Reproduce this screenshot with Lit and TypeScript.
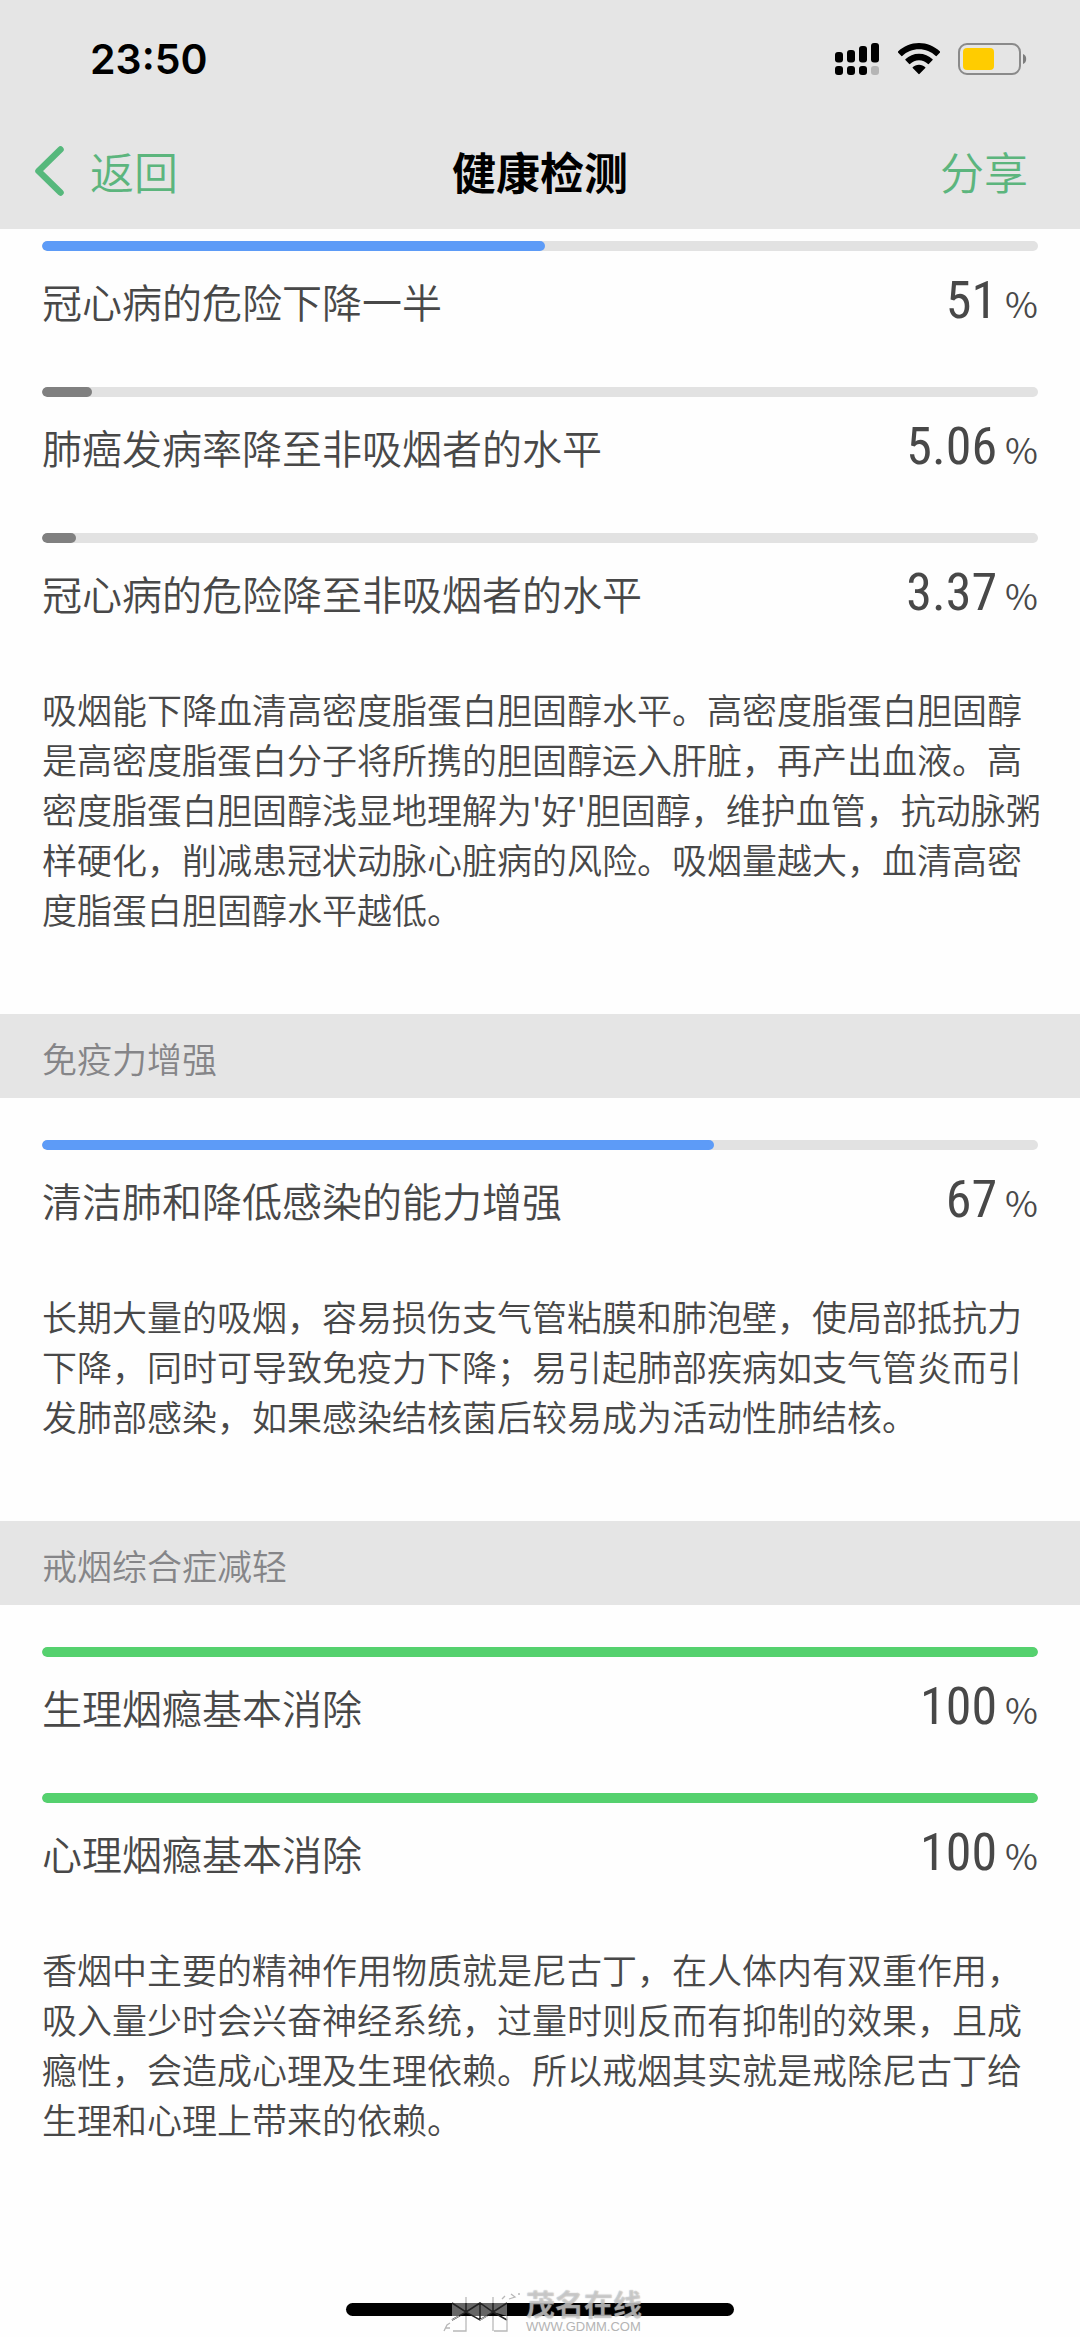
import { LitElement, html, css, svg } from "lit";
import { customElement, property } from "lit/decorators.js";

interface Metric {
  label: string;
  value: string;
  progress: number;
  tone: "blue" | "gray" | "green";
}

interface Section {
  title?: string;
  metrics: Metric[];
  text: string;
}

const sections: Section[] = [
  {
    metrics: [
      { label: "冠心病的危险下降一半", value: "51", progress: 50.5, tone: "blue" },
      { label: "肺癌发病率降至非吸烟者的水平", value: "5.06", progress: 5, tone: "gray" },
      { label: "冠心病的危险降至非吸烟者的水平", value: "3.37", progress: 3.37, tone: "gray" },
    ],
    text: "吸烟能下降血清高密度脂蛋白胆固醇水平。高密度脂蛋白胆固醇是高密度脂蛋白分子将所携的胆固醇运入肝脏，再产出血液。高密度脂蛋白胆固醇浅显地理解为'好'胆固醇，维护血管，抗动脉粥样硬化，削减患冠状动脉心脏病的风险。吸烟量越大，血清高密度脂蛋白胆固醇水平越低。",
  },
  {
    title: "免疫力增强",
    metrics: [
      { label: "清洁肺和降低感染的能力增强", value: "67", progress: 67.5, tone: "blue" },
    ],
    text: "长期大量的吸烟，容易损伤支气管粘膜和肺泡壁，使局部抵抗力下降，同时可导致免疫力下降；易引起肺部疾病如支气管炎而引发肺部感染，如果感染结核菌后较易成为活动性肺结核。",
  },
  {
    title: "戒烟综合症减轻",
    metrics: [
      { label: "生理烟瘾基本消除", value: "100", progress: 100, tone: "green" },
      { label: "心理烟瘾基本消除", value: "100", progress: 100, tone: "green" },
    ],
    text: "香烟中主要的精神作用物质就是尼古丁，在人体内有双重作用，吸入量少时会兴奋神经系统，过量时则反而有抑制的效果，且成瘾性，会造成心理及生理依赖。所以戒烟其实就是戒除尼古丁给生理和心理上带来的依赖。",
  },
];

@customElement("status-bar")
export class StatusBar extends LitElement {
  static styles = css`
    :host {
      display: flex;
      box-sizing: border-box;
      align-items: center;
      justify-content: space-between;
      height: 118px;
      padding: 0 52px 0 90px;
    }
    .time {
      font: 600 41px/50px Inter, "Liberation Sans", sans-serif;
      color: #000;
    }
    .icons {
      display: flex;
      align-items: center;
      gap: 18px;
    }
    svg {
      display: block;
    }
  `;

  render() {
    const bars = [9, 7, 3, 0];
    return html`
      <span class="time">23:50</span>
      <div class="icons">
        <svg width="45" height="32" viewBox="0 0 45 32" aria-hidden="true">
          ${bars.map(
            (top, i) => svg`
              <rect x=${i * 12} y=${top} width="8" height=${19.5 - top} rx="3"></rect>
              <rect x=${i * 12} y="23" width="8" height="9" rx="3" fill=${i === 3 ? "#b5b5b5" : "#000"}></rect>`
          )}
        </svg>
        <svg width="42" height="32" viewBox="0 0 42 32" aria-hidden="true">
          <path d="M21 0C13 0 5.700 3 0 8.600Q-.3 9 0 9.400L3.400 13Q3.800 13.300 4.200 13C8.800 8.700 14.600 6.300 21 6.300S33.200 8.700 37.800 13Q38.200 13.300 38.600 13L42 9.400Q42.200 9 42 8.600C36.300 3 29 0 21 0Z"></path>
          <path d="M21 10.800C15.800 10.800 11 12.800 7.400 16.300Q7 16.700 7.400 17.100L11.200 21Q11.600 21.300 12 21C14.500 18.700 17.600 17.300 21 17.300S27.500 18.700 30 21Q30.400 21.300 30.800 21L34.600 17.100Q35 16.700 34.600 16.300C31 12.800 26.200 10.800 21 10.800Z"></path>
          <path d="M21 21.800C18.500 21.800 16.300 22.800 14.700 24.300Q14.300 24.700 14.700 25.100L20.600 31Q21 31.300 21.400 31L27.300 25.100Q27.700 24.700 27.300 24.300C25.700 22.800 23.500 21.800 21 21.800Z"></path>
        </svg>
        <svg width="70" height="32" viewBox="0 0 70 32" aria-hidden="true">
          <rect x="1" y="1" width="61" height="30" rx="8" fill="none" stroke="#8a8a8a" stroke-width="2"></rect>
          <rect x="5" y="5" width="31" height="22" rx="4" fill="#fc0"></rect>
          <path d="M65 11C67 11.500 68.200 13.500 68.200 16S67 20.500 65 21Z" fill="#7d7d7d"></path>
        </svg>
      </div>
    `;
  }
}

@customElement("nav-bar")
export class NavBar extends LitElement {
  static styles = css`
    :host {
      display: grid;
      box-sizing: border-box;
      grid-template-columns: 1fr auto 1fr;
      align-items: center;
      height: 111px;
      padding: 0 52px 6px 34px;
      font-family: "Noto Sans CJK SC", sans-serif;
    }
    button {
      display: flex;
      align-items: center;
      gap: 26px;
      margin: 0;
      padding: 0;
      border: 0;
      background: none;
      color: #5cb57d;
      font: 350 44px/64px "Noto Sans CJK SC", sans-serif;
      cursor: pointer;
    }
    .share {
      justify-self: end;
    }
    h1 {
      margin: 0 0 0 18px;
      font-size: 44px;
      line-height: 64px;
      font-weight: 700;
      color: #000;
    }
  `;

  render() {
    return html`
      <button class="back" type="button">
        <svg width="30" height="50" viewBox="0 0 30 50" aria-hidden="true">
          <path d="M26.500 3.500L4.500 25L26.500 46.500" fill="none" stroke="#56b87c" stroke-width="6.500" stroke-linecap="round" stroke-linejoin="round"></path>
        </svg>
        返回
      </button>
      <h1>健康检测</h1>
      <button class="share" type="button">分享</button>
    `;
  }
}

@customElement("metric-row")
export class MetricRow extends LitElement {
  @property({ attribute: false }) metric!: Metric;

  static styles = css`
    :host {
      display: block;
    }
    .track {
      height: 10px;
      border-radius: 5px;
      background: #e2e2e2;
      overflow: hidden;
    }
    .fill {
      height: 100%;
      border-radius: 5px;
    }
    .blue {
      background: #5d9bf7;
    }
    .gray {
      background: #808080;
    }
    .green {
      background: #55d16e;
    }
    .info {
      display: flex;
      justify-content: space-between;
      align-items: baseline;
      height: 64px;
      margin-top: 18px;
      color: #484848;
    }
    .label {
      font: 350 40px/64px "Noto Sans CJK SC", sans-serif;
    }
    .value {
      display: flex;
      align-items: baseline;
      gap: 8px;
    }
    .number {
      font: 400 52px/64px "Roboto Condensed", Roboto, sans-serif;
    }
    .unit {
      font: 350 36px/64px "Noto Sans CJK SC", sans-serif;
    }
  `;

  render() {
    const m = this.metric;
    return html`
      <div class="track" role="progressbar" aria-label=${m.label} aria-valuenow=${m.value}>
        <div class="fill ${m.tone}" style="width:${m.progress}%"></div>
      </div>
      <div class="info">
        <span class="label">${m.label}</span>
        <span class="value"><span class="number">${m.value}</span><span class="unit">%</span></span>
      </div>
    `;
  }
}

@customElement("home-indicator")
export class HomeIndicator extends LitElement {
  static styles = css`
    :host {
      display: flex;
      justify-content: center;
      position: relative;
      padding-bottom: 21px;
    }
    .bar {
      width: 36%;
      height: 13px;
      border-radius: 7px;
      background: #000;
    }
    .mark {
      position: absolute;
      left: 50%;
      bottom: 0;
      display: flex;
      align-items: flex-end;
      gap: 6px;
      margin-left: -98px;
    }
    .words {
      display: flex;
      flex-direction: column;
      padding-bottom: 3px;
    }
    .name {
      font: 700 29px/28px "Liberation Sans", "Noto Sans CJK SC", sans-serif;
      color: rgba(255, 255, 255, 0.45);
      text-shadow: 0 0 1px rgba(130, 130, 130, 0.8);
    }
    .site {
      font: 400 13px/14px "Liberation Sans", sans-serif;
      color: #b4b4b4;
    }
  `;

  render() {
    return html`
      <div class="bar"></div>
      <div class="mark">
        <svg width="78" height="44" viewBox="0 0 78 44" aria-hidden="true">
          <path d="M10 10H65V23L51 19L38 27L24 19L10 27Z" fill="#fff" opacity=".4"></path>
          <path d="M10 10L24 19L38 10L51 19L65 10M24 19V10M51 19V10M10 27L24 19L38 27L51 19L65 27M38 10V27" fill="none" stroke="#222" stroke-width="1.500"></path>
          <path d="M24 4V10M51 4V10M24 23V38H11M51 23V38M65 23V38H52M10 27L17 23M38 27L45 23M2 38L5 32L8 30M3 35H8M60 6L63 3M69 1L73 4L67 6M76 1H78" fill="none" stroke="#b8b8b8" stroke-width="1.300"></path>
        </svg>
        <div class="words">
          <span class="name">茂名在线</span>
          <span class="site">WWW.GDMM.COM</span>
        </div>
      </div>
    `;
  }
}

@customElement("app-root")
export class AppRoot extends LitElement {
  static styles = css`
    :host {
      display: flex;
      flex-direction: column;
      min-height: 100vh;
      background: #fefefe;
      font-family: "Noto Sans CJK SC", sans-serif;
    }
    header {
      background: #e5e5e5;
    }
    h2 {
      margin: 0;
      padding: 19px 42px 15px;
      background: #e5e5e5;
      color: #858588;
      font-size: 35px;
      line-height: 50px;
      font-weight: 350;
    }
    .body {
      padding: 42px 42px 80px;
    }
    .body.scrolled {
      padding-top: 12px;
    }
    .metrics {
      display: flex;
      flex-direction: column;
      gap: 54px;
    }
    p {
      margin: 59px -10px 0 0;
      color: #484848;
      font-size: 35px;
      line-height: 50px;
      font-weight: 350;
    }
    home-indicator {
      margin-top: auto;
    }
  `;

  render() {
    return html`
      <header>
        <status-bar></status-bar>
        <nav-bar></nav-bar>
      </header>
      <main>
        ${sections.map(
          (s) => html`
            <section>
              ${s.title ? html`<h2>${s.title}</h2>` : null}
              <div class="body ${s.title ? "" : "scrolled"}">
                <div class="metrics">
                  ${s.metrics.map((m) => html`<metric-row .metric=${m}></metric-row>`)}
                </div>
                <p>${s.text}</p>
              </div>
            </section>
          `
        )}
      </main>
      <home-indicator></home-indicator>
    `;
  }
}
